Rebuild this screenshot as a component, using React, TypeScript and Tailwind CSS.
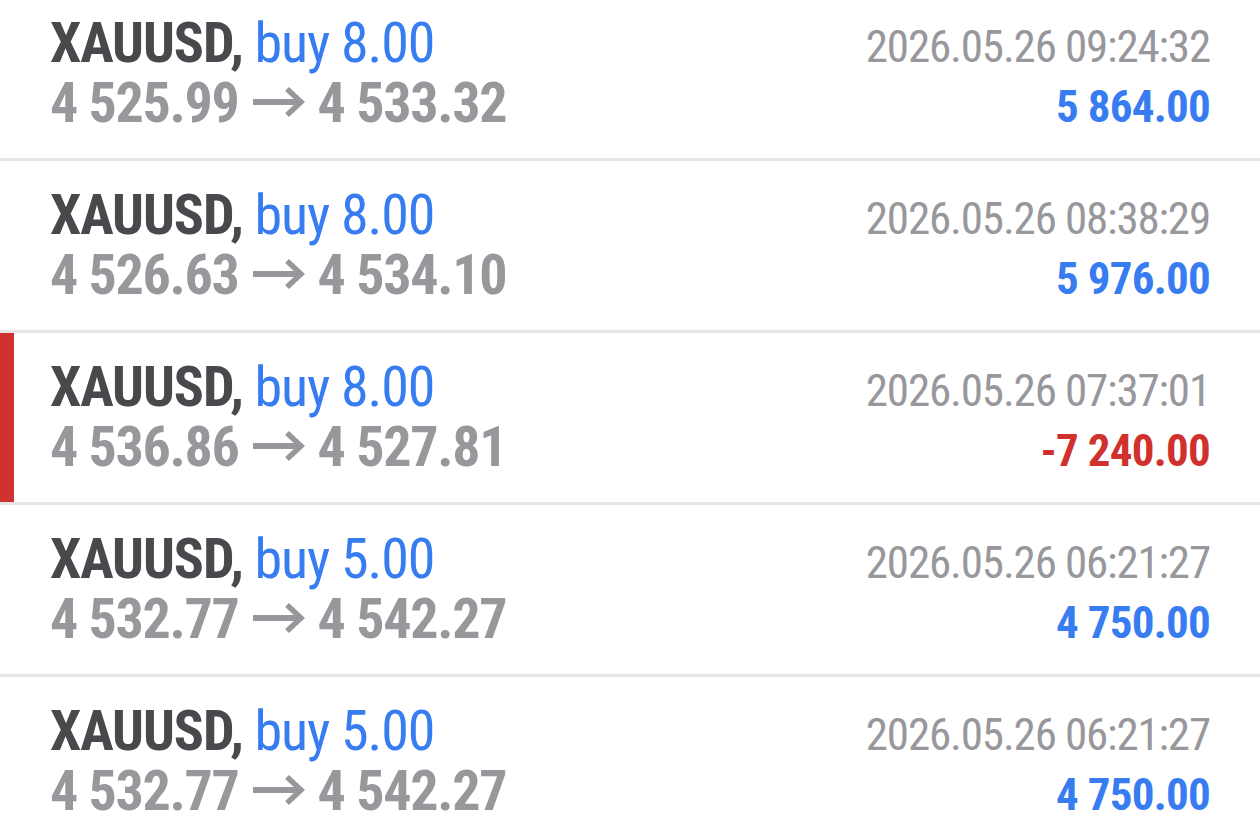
import React from "react";

type Deal = { vol: string; open: string; close: string; time: string; profit: string; loss?: boolean };

const deals: Deal[] = [
  { vol: "8.00", open: "4 525.99", close: "4 533.32", time: "2026.05.26 09:24:32", profit: "5 864.00" },
  { vol: "8.00", open: "4 526.63", close: "4 534.10", time: "2026.05.26 08:38:29", profit: "5 976.00" },
  { vol: "8.00", open: "4 536.86", close: "4 527.81", time: "2026.05.26 07:37:01", profit: "-7 240.00", loss: true },
  { vol: "5.00", open: "4 532.77", close: "4 542.27", time: "2026.05.26 06:21:27", profit: "4 750.00" },
  { vol: "5.00", open: "4 532.77", close: "4 542.27", time: "2026.05.26 06:21:27", profit: "4 750.00" },
];

function Arrow() {
  return (
    <svg
      width="52"
      height="30"
      viewBox="0 0 52 30"
      className="inline-block align-[5px] ml-[14px] mr-[13px]"
      aria-label="→"
    >
      <line x1="0" y1="15" x2="48" y2="15" stroke="#97979c" strokeWidth="6" />
      <polyline points="34,2 48,15 34,28" fill="none" stroke="#97979c" strokeWidth="5.5" strokeLinejoin="miter" />
    </svg>
  );
}

export default function App() {
  return (
    <div
      className="w-[1260px] h-[833px] overflow-hidden bg-white [font-stretch:condensed]"
      style={{ fontFamily: "Roboto, 'Noto Sans', sans-serif" }}
    >
      <div className="mt-[-11px] flex flex-col">
        {deals.map((d, i) => (
          <div key={i} className="relative h-[172px] border-b-[3px] border-[#e6e6e6] pt-[24px] pl-[50px] pr-[50px]">
            {d.loss && <div className="absolute left-0 top-0 bottom-0 w-[14px] bg-[#d0332d]" />}
            <div className="flex h-[60px] justify-between items-baseline leading-[60px]">
              <div className="text-[56px] tracking-[-1.1px] whitespace-nowrap">
                <span className="font-bold text-[#48484d]">XAUUSD,</span>
                <span className="text-[#377cf0]"> buy {d.vol}</span>
              </div>
              <div className="text-[45px] tracking-[-1.15px] text-[#97979c] whitespace-nowrap">{d.time}</div>
            </div>
            <div className="flex h-[60px] justify-between items-baseline leading-[60px]">
              <div className="text-[56px] tracking-[-1.3px] font-bold text-[#97979c] whitespace-nowrap">
                {d.open}
                <Arrow />
                {d.close}
              </div>
              <div
                className={
                  "text-[45px] tracking-[-0.75px] font-bold whitespace-nowrap " +
                  (d.loss ? "text-[#d0312d]" : "text-[#377cf0]")
                }
              >
                {d.profit}
              </div>
            </div>
          </div>
        ))}
      </div>
    </div>
  );
}
